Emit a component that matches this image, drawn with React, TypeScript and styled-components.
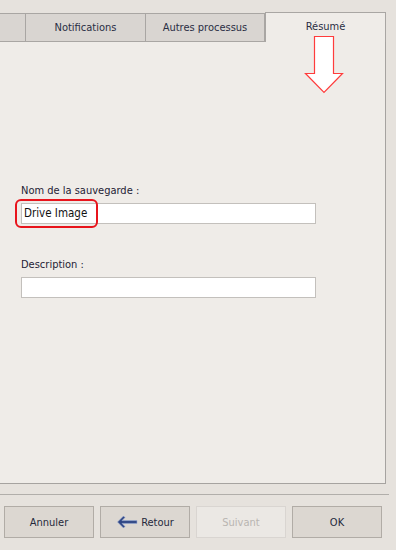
import React from 'react'
import styled, { createGlobalStyle } from 'styled-components'

const GlobalStyle = createGlobalStyle`
  html, body {
    margin: 0;
    padding: 0;
    background: #e6e2dd;
  }
  body {
    font-family: "DejaVu Sans Condensed", "Liberation Sans", sans-serif;
    font-size: 11px;
    color: #1e2235;
  }
`

const Window = styled.div`
  position: relative;
  width: 396px;
  height: 550px;
  display: flex;
  flex-direction: column;
  background: #e6e2dd;
  overflow: hidden;
`

const TabStrip = styled.div`
  display: flex;
  align-items: flex-end;
  height: 42px;
`

const Tab = styled.div<{ $width: number; $active?: boolean }>`
  box-sizing: border-box;
  width: ${(p) => p.$width}px;
  height: ${(p) => (p.$active ? 31 : 29)}px;
  display: flex;
  align-items: center;
  justify-content: center;
  padding-bottom: ${(p) => (p.$active ? 4 : 1)}px;
  background: ${(p) => (p.$active ? '#efece8' : '#d9d5d1')};
  border-top: 1px solid #a9a6a3;
  border-right: 1px solid #a9a6a3;
  border-left: ${(p) => (p.$active ? '1px solid #a9a6a3' : 'none')};
  border-bottom: ${(p) => (p.$active ? 'none' : '1px solid #a9a6a3')};
  margin-bottom: ${(p) => (p.$active ? -1 : 0)}px;
  color: #2a2e44;
  white-space: nowrap;
`

const Panel = styled.div`
  box-sizing: border-box;
  width: 386px;
  height: 442px;
  background: #efece8;
  border-right: 1px solid #a6a3a0;
  border-bottom: 1px solid #a6a3a0;
  padding: 142px 0 0 21px;
  display: flex;
  flex-direction: column;
`

const FieldLabel = styled.div`
  height: 14px;
  line-height: 14px;
  margin-bottom: 5px;
`

const TextField = styled.div`
  box-sizing: border-box;
  width: 295px;
  height: 21px;
  background: #ffffff;
  border: 1px solid #c3c0bc;
  padding-left: 2px;
  line-height: 19px;
  font-size: 11.5px;
  color: #111;
  margin-bottom: 34px;
`

const Separator = styled.div`
  width: 389px;
  height: 1px;
  margin-top: 10px;
  background: #b1aeaa;
`

const ButtonRow = styled.div`
  display: flex;
  gap: 6px;
  padding: 11px 0 0 4px;
`

const Button = styled.div<{ $disabled?: boolean }>`
  box-sizing: border-box;
  width: 90px;
  height: 32px;
  display: flex;
  align-items: center;
  justify-content: center;
  gap: 3px;
  background: ${(p) => (p.$disabled ? '#ebe8e4' : '#dcd7d1')};
  border: 1px solid ${(p) => (p.$disabled ? '#d9d5d1' : '#b1aca6')};
  color: ${(p) => (p.$disabled ? '#b9b5b1' : '#25293c')};
`

const Highlight = styled.div`
  position: absolute;
  left: 15px;
  top: 199px;
  width: 83px;
  height: 29px;
  box-sizing: border-box;
  border: 2px solid #e8141c;
  border-radius: 6px;
`

const ArrowMark = styled.svg`
  position: absolute;
  left: 304px;
  top: 35px;
`

const BackArrow = () => (
  <svg width="22" height="14" viewBox="0 0 22 14">
    <path
      d="M7.5 1 L1.5 7 L7.5 13 L9 11.5 L6 8.4 L21 8.4 L21 5.6 L6 5.6 L9 2.5 Z"
      fill="#2f4685"
      stroke="#9fb0d6"
      strokeWidth="0.6"
    />
  </svg>
)

const App = (): React.ReactElement => {
  return (
    <>
      <GlobalStyle />
      <Window>
        <TabStrip>
          <Tab $width={26} />
          <Tab $width={120}>Notifications</Tab>
          <Tab $width={119}>Autres processus</Tab>
          <Tab $width={121} $active>
            Résumé
          </Tab>
        </TabStrip>
        <Panel>
          <FieldLabel>Nom de la sauvegarde :</FieldLabel>
          <TextField>Drive Image</TextField>
          <FieldLabel>Description :</FieldLabel>
          <TextField />
        </Panel>
        <Separator />
        <ButtonRow>
          <Button>Annuler</Button>
          <Button>
            <BackArrow />
            Retour
          </Button>
          <Button $disabled>Suivant</Button>
          <Button>OK</Button>
        </ButtonRow>
        <Highlight />
        <ArrowMark width="40" height="60" viewBox="0 0 40 60">
          <path
            d="M10.5 1.5 L29.5 1.5 L29.5 38.5 L38.5 38.5 L20 57.5 L1.5 38.5 L10.5 38.5 Z"
            fill="#ffffff"
            stroke="#ff3c3c"
            strokeWidth="1.2"
          />
        </ArrowMark>
      </Window>
    </>
  )
}

export default App
